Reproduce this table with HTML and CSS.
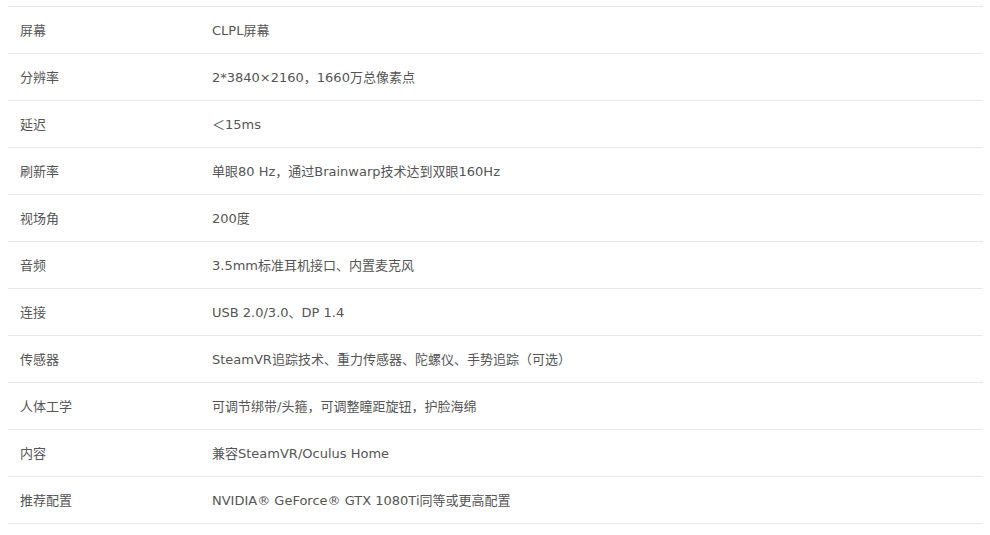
FILE: index.html
```html
<!DOCTYPE html>
<html lang="zh-CN">
<head>
    <meta charset="UTF-8">
    <title>产品参数</title>
    <link rel="stylesheet" href="styles.css">
</head>
<body>
    <table class="spec-table">
        <tr><td class="spec-name">屏幕</td><td>CLPL屏幕</td></tr>
        <tr><td class="spec-name">分辨率</td><td>2*3840×2160，1660万总像素点</td></tr>
        <tr><td class="spec-name">延迟</td><td>＜15ms</td></tr>
        <tr><td class="spec-name">刷新率</td><td>单眼80 Hz，通过Brainwarp技术达到双眼160Hz</td></tr>
        <tr><td class="spec-name">视场角</td><td>200度</td></tr>
        <tr><td class="spec-name">音频</td><td>3.5mm标准耳机接口、内置麦克风</td></tr>
        <tr><td class="spec-name">连接</td><td>USB 2.0/3.0、DP 1.4</td></tr>
        <tr><td class="spec-name">传感器</td><td>SteamVR追踪技术、重力传感器、陀螺仪、手势追踪（可选）</td></tr>
        <tr><td class="spec-name">人体工学</td><td>可调节绑带/头箍，可调整瞳距旋钮，护脸海绵</td></tr>
        <tr><td class="spec-name">内容</td><td>兼容SteamVR/Oculus Home</td></tr>
        <tr><td class="spec-name">推荐配置</td><td>NVIDIA® GeForce® GTX 1080Ti同等或更高配置</td></tr>
    </table>
</body>
</html>
```

FILE: styles.css
```css
/* Page */
body {
    margin: 0;
    padding: 6px 0 0 8px;
    background: #fff;
    font-family: "DejaVu Sans", "Noto Sans CJK SC", sans-serif;
    font-size: 13px;
    color: #555;
}

/* Spec table */
.spec-table {
    width: 975px;
    border-collapse: collapse;
    border-top: 1px solid #e8e8e8;
}

.spec-table td {
    height: 47px;
    padding: 0 0 2px 12px;
    border-bottom: 1px solid #e8e8e8;
    vertical-align: middle;
    white-space: nowrap;
    box-sizing: border-box;
}

.spec-table .spec-name {
    width: 192px;
}
```
